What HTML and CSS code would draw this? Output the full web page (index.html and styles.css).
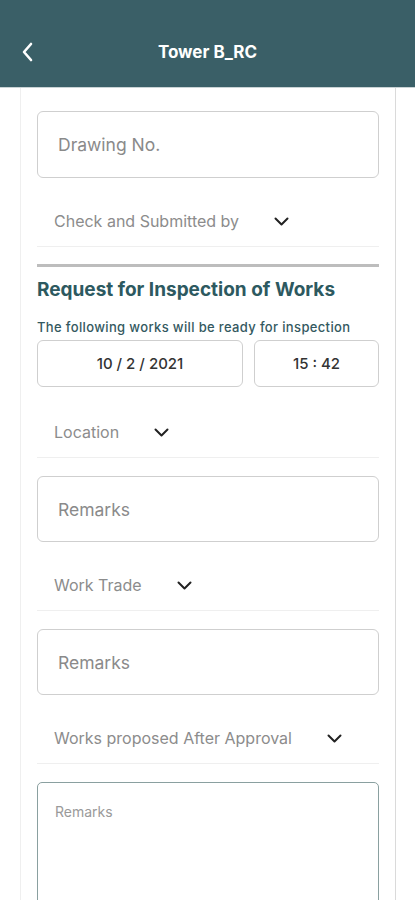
FILE: index.html
```html
<!DOCTYPE html>
<html lang="en">
<head>
  <meta charset="UTF-8">
  <title>Tower B_RC</title>
  <link rel="stylesheet" href="styles.css">
</head>
<body>
  <div class="app-header">
    <span class="back-btn">
      <svg width="12" height="20" viewBox="0 0 12 20"><path d="M10 2 L3 10 L10 18" fill="none" stroke="#fff" stroke-width="2.6" stroke-linecap="round" stroke-linejoin="round"/></svg>
    </span>
    <div class="title">Tower B_RC</div>
  </div>

  <div class="form-card">
    <div class="field">Drawing No.</div>

    <div class="dropdown">
      <span>Check and Submitted by</span>
      <svg class="chev" width="15" height="9" viewBox="0 0 15 9"><path d="M1.5 1.5 L7.5 7.5 L13.5 1.5" fill="none" stroke="#222" stroke-width="2" stroke-linecap="round" stroke-linejoin="round"/></svg>
    </div>

    <div class="section-line"></div>

    <h2 class="section-title">Request for Inspection of Works</h2>
    <div class="section-sub">The following works will be ready for inspection</div>

    <div class="datetime">
      <div class="date-box">10 / 2 / 2021</div>
      <div class="time-box">15 : 42</div>
    </div>

    <div class="dropdown">
      <span>Location</span>
      <svg class="chev" width="15" height="9" viewBox="0 0 15 9"><path d="M1.5 1.5 L7.5 7.5 L13.5 1.5" fill="none" stroke="#222" stroke-width="2" stroke-linecap="round" stroke-linejoin="round"/></svg>
    </div>

    <div class="field">Remarks</div>

    <div class="dropdown">
      <span>Work Trade</span>
      <svg class="chev" width="15" height="9" viewBox="0 0 15 9"><path d="M1.5 1.5 L7.5 7.5 L13.5 1.5" fill="none" stroke="#222" stroke-width="2" stroke-linecap="round" stroke-linejoin="round"/></svg>
    </div>

    <div class="field">Remarks</div>

    <div class="dropdown">
      <span>Works proposed After Approval</span>
      <svg class="chev" width="15" height="9" viewBox="0 0 15 9"><path d="M1.5 1.5 L7.5 7.5 L13.5 1.5" fill="none" stroke="#222" stroke-width="2" stroke-linecap="round" stroke-linejoin="round"/></svg>
    </div>

    <div class="textarea">Remarks</div>
  </div>
</body>
</html>
```

FILE: styles.css
```css
body {
  margin: 0;
  background: #fff;
  font-family: Inter, Roboto, "Noto Sans", sans-serif;
}

.app-header {
  height: 88px;
  background: #3a5f67;
  border-bottom: 1px solid #c9d3d5;
  display: flex;
  align-items: center;
  padding-top: 16px;
  box-sizing: border-box;
  position: relative;
}

.back-btn {
  display: flex;
  margin-left: 21px;
}

.title {
  position: absolute;
  left: 0;
  right: 0;
  top: 16px;
  bottom: 0;
  display: flex;
  align-items: center;
  justify-content: center;
  color: #fff;
  font-weight: bold;
  font-size: 17px;
  pointer-events: none;
}

.form-card {
  margin: 0 19px 0 20px;
  border-left: 1px solid #efefef;
  border-right: 1px solid #dadada;
  padding: 23px 16px 40px;
  min-height: 900px;
}

.field {
  height: 66px;
  border: 1px solid #cfcfcf;
  border-radius: 6px;
  box-sizing: border-box;
  display: flex;
  align-items: center;
  padding-left: 20px;
  font-size: 17.5px;
  color: #8a8a8a;
  margin-top: 18px;
}

.form-card > .field:first-child {
  height: 67px;
  margin-top: 0;
}

.dropdown {
  height: 50px;
  margin-top: 18px;
  border-bottom: 1px solid #efefef;
  display: flex;
  align-items: center;
  padding-left: 17px;
  font-size: 16px;
  color: #8c8c8c;
  gap: 35px;
}

.chev {
  flex: none;
}

.section-line {
  height: 3px;
  background: #bdbdbd;
  margin-top: 17px;
}

.section-title {
  margin: 11px 0 0;
  font-size: 19px;
  line-height: 24px;
  font-weight: bold;
  color: #2d5960;
}

.section-sub {
  margin-top: 17px;
  font-size: 13px;
  line-height: 16px;
  letter-spacing: 0.35px;
  font-weight: 500;
  color: #34595f;
}

.datetime {
  display: flex;
  gap: 11px;
  margin-top: 5px;
}

.date-box,
.time-box {
  height: 47px;
  border: 1px solid #cfcfcf;
  border-radius: 6px;
  box-sizing: border-box;
  display: flex;
  align-items: center;
  justify-content: center;
  font-size: 15px;
  font-weight: 500;
  color: #333;
}

.date-box {
  width: 206px;
}

.time-box {
  flex: 1;
}

.datetime + .dropdown {
  margin-top: 20px;
}

.textarea {
  margin-top: 18px;
  height: 150px;
  border: 1px solid #8aa0a0;
  border-radius: 5px;
  padding: 20px 17px;
  font-size: 14px;
  color: #9a9a9a;
}
```
